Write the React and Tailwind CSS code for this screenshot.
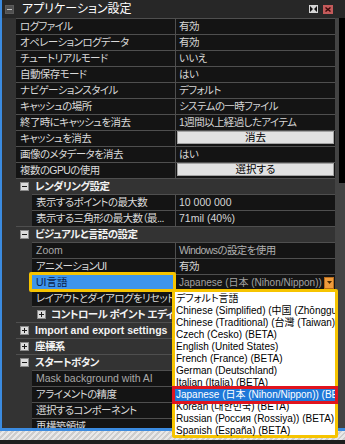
import React from 'react';

const isCjk = (s) => /[\u3000-\u9fff]/.test(s || '');

function Toggle({ open, dark }) {
  return (
    <svg width="9" height="9" viewBox="0 0 9 9" className="shrink-0">
      <rect x="0.5" y="0.5" width="8" height="8" fill={dark ? '#505050' : '#dcdcdc'} stroke={dark ? '#5c5c5c' : '#8a8a8a'} />
      <path d={open ? 'M2 4.5H7' : 'M2 4.5H7M4.5 2V7'} stroke={dark ? '#c4c4c4' : '#1a1a1a'} strokeWidth="1" />
    </svg>
  );
}

function Row({ sub, label, value, dim, dimValue, children }) {
  return (
    <div className="flex h-[16px] shrink-0">
      <div className={sub ? 'w-[30px] shrink-0' : 'w-[14px] shrink-0'} />
      <div className="flex flex-1 min-w-0 border-t border-[#4f4f4f] bg-[#141414]">
        <div
          className={`${sub ? 'w-[144px]' : 'w-[160px]'} shrink-0 border-r border-[#4f4f4f] pl-[4px] overflow-hidden whitespace-nowrap leading-[15px] ${isCjk(label) ? 'tracking-[-0.6px]' : ''} ${dim ? 'text-[#a9a9a9]' : 'text-[#dadada]'}`}
        >
          {label}
        </div>
        <div
          className={`flex-1 min-w-0 pl-[3px] overflow-hidden whitespace-nowrap leading-[15px] ${isCjk(value) ? 'tracking-[-0.6px]' : ''} ${dimValue ? 'text-[#b0b0b0]' : 'text-[#d6d6d6]'}`}
        >
          {children ?? value}
        </div>
      </div>
    </div>
  );
}

function Group({ sub, open, label }) {
  return (
    <div className="flex h-[16px] shrink-0">
      <div className={sub ? 'w-[30px] shrink-0' : 'w-[14px] shrink-0'} />
      <div className={`flex flex-1 items-center border-t border-[#4f4f4f] ${sub ? 'pl-[5px] gap-[5px]' : 'pl-[4px] gap-[6px]'}`}>
        <Toggle open={open} />
        <span className={`font-bold text-[#f2f2f2] leading-[15px] whitespace-nowrap ${isCjk(label) ? 'tracking-[-0.6px]' : ''}`}>{label}</span>
      </div>
    </div>
  );
}

function ValueButton({ text }) {
  return (
    <div className="h-[13px] ml-[-2px] mr-[1px] bg-[#e1e1e1] border border-[#a3a3a3] text-black text-center leading-[11px]">
      {text}
    </div>
  );
}

const appRows = [
  ['ログファイル', '有効'],
  ['オペレーションログデータ', '有効'],
  ['チュートリアルモード', 'いいえ'],
  ['自動保存モード', 'はい'],
  ['ナビゲーションスタイル', 'デフォルト'],
  ['キャッシュの場所', 'システムの一時ファイル'],
  ['終了時にキャッシュを消去', '1週間以上経過したアイテム'],
];

const languages = [
  'デフォルト言語',
  'Chinese (Simplified) (中国 (Zhōngguó)) (BETA)',
  'Chinese (Traditional) (台灣 (Taiwan)) (BETA)',
  'Czech (Česko) (BETA)',
  'English (United States)',
  'French (France) (BETA)',
  'German (Deutschland)',
  'Italian (Italia) (BETA)',
  'Japanese (日本 (Nihon/Nippon)) (BETA)',
  'Korean (대한민국) (BETA)',
  'Russian (Россия (Rossiya)) (BETA)',
  'Spanish (España) (BETA)',
];

export default function App() {
  return (
    <div className="relative w-[345px] h-[444px] overflow-hidden bg-[#1e1e1e] text-[10.5px] [font-family:'Liberation_Sans','Noto_Sans_CJK_JP',sans-serif] [font-feature-settings:'palt']">
      {/* Panel */}
      <div className="flex flex-col h-[431px] border-l-2 border-b-[3px] border-[#3b8be0] bg-[#333333]">
        {/* Title bar */}
        <div className="flex items-center h-[18px] shrink-0 bg-[#272727] pl-[3px] pr-[12px]">
          <Toggle open dark />
          <span className="ml-[8px] text-[12px] text-white leading-[18px] whitespace-nowrap">アプリケーション設定</span>
          <div className="ml-auto flex items-center gap-[5px]">
            <div className="w-[9px] h-[8px] bg-[#d6d6d6] flex items-center justify-center">
              <svg width="7" height="6" viewBox="0 0 7 6">
                <path d="M0 0L3 3L0 6Z M7 0L4 3L7 6Z" fill="#111" />
              </svg>
            </div>
            <div className="w-[10px] h-[9px] bg-[#c45a5a] flex items-center justify-center">
              <svg width="6" height="5" viewBox="0 0 6 5">
                <path d="M0.5 0.5L5.5 4.5M5.5 0.5L0.5 4.5" stroke="#3a0808" strokeWidth="1.4" />
              </svg>
            </div>
          </div>
        </div>

        <div className="flex flex-1 min-h-0">
          {/* Property grid */}
          <div className="flex flex-col flex-1 min-w-0 overflow-hidden">
            {appRows.map(([l, v]) => (
              <Row key={l} label={l} value={v} />
            ))}
            <Row label="キャッシュを消去">
              <ValueButton text="消去" />
            </Row>
            <Row label="画像のメタデータを消去" value="はい" />
            <Row label="複数のGPUの使用">
              <ValueButton text="選択する" />
            </Row>

            <Group open label="レンダリング設定" />
            <Row sub label="表示するポイントの最大数" value="10 000 000" />
            <Row sub label="表示する三角形の最大数（最..." value="71mil (40%)" />

            <Group open label="ビジュアルと言語の設定" />
            <Row sub dim dimValue label="Zoom" value="Windowsの設定を使用" />
            <Row sub label="アニメーションUI" value="有効" />

            {/* UI language row */}
            <div className="flex h-[16px] shrink-0">
              <div className="w-[30px] shrink-0" />
              <div className="flex flex-1 min-w-0 border-t border-[#4f4f4f] bg-[#141414]">
                <div className="relative w-[144px] shrink-0 border-r border-[#4f4f4f] bg-[#3e95ec] pl-[4px] leading-[15px] text-[#0b1f4a] whitespace-nowrap">
                  UI言語
                  <div className="absolute left-[-3px] right-[-1px] top-[-3px] bottom-[-2px] border-[3px] border-[#f6c400] rounded-[2px]" />
                </div>
                <div className="flex flex-1 min-w-0 items-center">
                  <span className="flex-1 min-w-0 pl-[3px] overflow-hidden whitespace-nowrap text-[10px] leading-[15px] text-[#a2a2a2]">
                    Japanese (日本 (Nihon/Nippon))
                  </span>
                  <span className="w-[10px] h-[12px] mr-[1px] shrink-0 bg-[#ef9c3c] border border-[#b86c1c] flex items-center justify-center">
                    <svg width="5" height="3" viewBox="0 0 5 3">
                      <path d="M0 0H5L2.5 3Z" fill="#4a2a00" />
                    </svg>
                  </span>
                </div>
              </div>
            </div>

            <Row sub label="レイアウトとダイアログをリセット" value="" />
            <Group sub label="コントロール ポイント エディタ" />
            <Group label="Import and export settings" />
            <Group label="座標系" />
            <Group open label="スタートボタン" />
            <Row sub dim label="Mask background with AI" value="" />
            <Row sub label="アライメントの精度" value="" />
            <Row sub label="選択するコンポーネント" value="" />
            <Row sub label="再構築領域" value="" />
          </div>

          {/* Scrollbar */}
          <div className="flex flex-col w-[10px] shrink-0 bg-[#434343]">
            <div className="ml-auto w-[6px] h-[165px] bg-black" />
          </div>
        </div>
      </div>

      {/* Striped status strip */}
      <div className="h-[9px] bg-[repeating-linear-gradient(135deg,#cdcdcd_0px,#cdcdcd_2px,#e8e8e8_2px,#e8e8e8_4px)]" />

      {/* Language dropdown */}
      <div className="absolute left-[172px] top-[289px] w-[166px] h-[149px] border-[3px] border-[#f6c400] rounded-[2px] bg-white pt-[1px] z-10">
        {languages.map((lang) => (
          <div
            key={lang}
            className={`h-[12px] pl-[1px] text-[10px] leading-[12px] whitespace-nowrap overflow-hidden ${lang.startsWith('Japanese') ? 'bg-[#1f78d8] text-white' : 'text-black'}`}
          >
            {lang}
          </div>
        ))}
        <div className="absolute left-[-3px] right-[-3px] top-[94px] h-[18px] border-[3px] border-[#e0141e]" />
      </div>
    </div>
  );
}
